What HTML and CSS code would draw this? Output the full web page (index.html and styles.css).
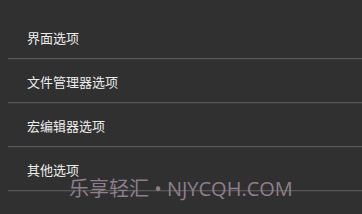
FILE: index.html
```html
<!DOCTYPE html>
<html>
<head>
<meta charset="utf-8">
<link rel="stylesheet" href="styles.css">
</head>
<body>
<div class="page">
  <ul class="list">
    <li class="item">界面选项</li>
    <li class="item">文件管理器选项</li>
    <li class="item">宏编辑器选项</li>
    <li class="item">其他选项</li>
  </ul>
  <div class="watermark">乐享轻汇 • NJYCQH.COM</div>
</div>
</body>
</html>
```

FILE: styles.css
```css
html, body {
  margin: 0;
  padding: 0;
  background: #303030;
}
.page {
  position: relative;
  width: 362px;
  height: 214px;
  overflow: hidden;
  background: #303030;
  font-family: "Noto Sans CJK SC", "Noto Sans", sans-serif;
}
.list {
  list-style: none;
  margin: 0;
  padding: 16px 0 0 8px;
}
.item {
  height: 42px;
  display: flex;
  align-items: center;
  padding-left: 19px;
  color: #ececec;
  font-size: 13px;
  border-bottom: 1px solid #575757;
  box-shadow: 0 1px 0 #3b3b3b;
  margin-bottom: 1px;
}
.watermark {
  position: absolute;
  left: 69px;
  top: 175px;
  font-family: "Open Sans", "Noto Sans CJK SC", sans-serif;
  font-size: 20px;
  line-height: 28px;
  color: #8e7e8e;
  white-space: nowrap;
}
```
